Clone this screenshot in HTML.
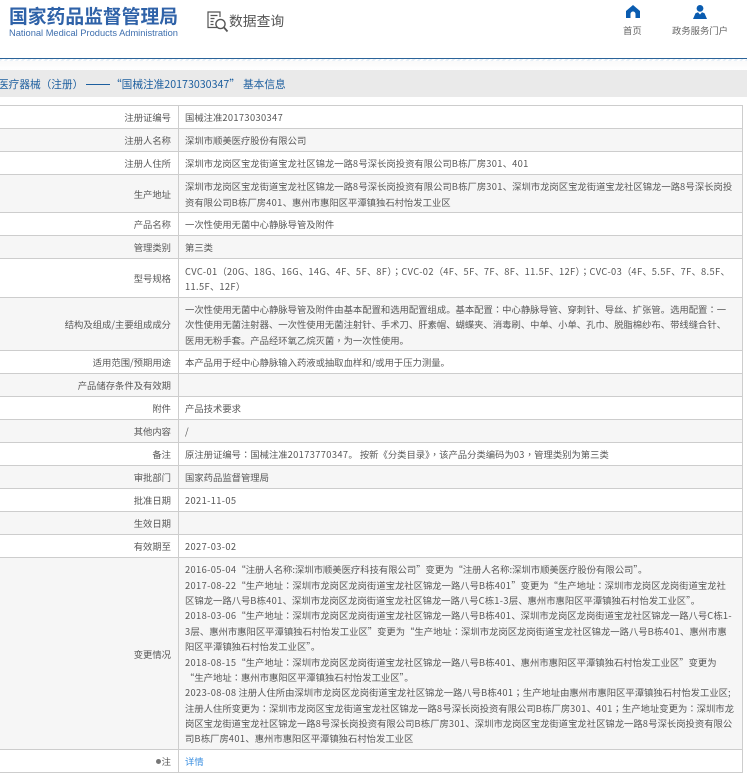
<!DOCTYPE html>
<html><head><meta charset="utf-8"><title>数据查询</title>
<style>
html,body{margin:0;padding:0;background:#fff;width:747px;height:780px;overflow:hidden}
body{font-family:"Noto Sans CJK SC","Liberation Sans",sans-serif;position:relative;color:#585858}
#w{position:absolute;left:0;top:0;width:747px;height:780px;overflow:hidden;filter:blur(.3px)}
.a{position:absolute;white-space:nowrap}
.r{position:absolute;left:0;width:743px;border-top:1px solid #cdcdcd;box-sizing:border-box}
.r.g{background:#f6f6f6}
.l{position:absolute;left:0;width:171px;top:0;bottom:0;display:flex;align-items:center;justify-content:flex-end;font-size:9.33px;color:#585858;white-space:nowrap}
.v{position:absolute;left:185px;top:2px;bottom:0;display:flex;align-items:center;font-size:9.33px;line-height:15.36px;color:#585858;white-space:nowrap}
.d{position:absolute;left:178px;top:0;bottom:0;width:1px;background:#cdcdcd}
i{font-style:normal;letter-spacing:.35px}
b{font-weight:normal;font-family:"Noto Sans CJK TC",sans-serif}
</style></head><body><div id="w">
<div class="a" style="left:9px;top:3px;font-size:18.8px;line-height:26px;font-weight:bold;color:#2f62a8">国家药品监督管理局</div>
<div class="a" style="left:9px;top:27px;font-family:'Liberation Sans',sans-serif;font-size:9.3px;line-height:12px;color:#3f6fae">National Medical Products Administration</div>
<svg class="a" style="left:207px;top:11px" width="23" height="22" viewBox="0 0 23 22" fill="none" stroke="#555" stroke-width="1.2"><path d="M11 16.5H1V1h12v5"/><path d="M3.5 4.5h7M3.5 7.5h4M3.5 10.5h3M3.5 13.5h3"/><circle cx="13.5" cy="13" r="4.6" stroke-width="1.4"/><path d="M17 16.5l3.5 4" stroke-width="1.8"/></svg>
<div class="a" style="left:229px;top:9px;font-size:13.8px;line-height:22px;color:#555">数据查询</div>
<svg class="a" style="left:626px;top:5px" width="14" height="13" viewBox="0 0 14 13"><path fill="#0a5cb0" d="M7 0L14 6V13H9.5V9a2.5 2.5 0 0 0-5 0V13H0V6Z"/></svg>
<div class="a" style="left:623px;top:23px;font-size:9.33px;line-height:14px;color:#666">首页</div>
<svg class="a" style="left:693px;top:5px" width="14" height="14" viewBox="0 0 14 14"><circle cx="7" cy="3.4" r="3.4" fill="#0a5cb0"/><path fill="#0a5cb0" d="M0 14L2.5 8.2L5 7.2L7 9.5L9 7.2L11.5 8.2L14 14Z"/></svg>
<div class="a" style="left:672px;top:23px;font-size:9.33px;line-height:14px;color:#666">政务服务门户</div>
<div class="a" style="left:0;top:58px;width:747px;height:1px;background:#2b6399"></div>
<div class="a" style="left:0;top:59px;width:747px;height:2px;background:repeating-linear-gradient(135deg,#e6eff7 0 2px,#fff 2px 4px)"></div>
<div class="a" style="left:0;top:61px;width:747px;height:9px;background:linear-gradient(#fafafa,#fff)"></div>
<div class="a" style="left:0;top:70px;width:747px;height:27px;background:#eaeaea"></div>
<div class="a" style="left:-2px;top:71px;font-size:10.67px;line-height:27px;color:#1d5f9f">医疗器械（注册）</div>
<div class="a" style="left:86px;top:83.5px;width:24px;height:1px;background:#1d5f9f"></div>
<div class="a" style="left:111px;top:71px;font-size:10.67px;line-height:27px;color:#1d5f9f">“国械注准20173030347”</div>
<div class="a" style="left:243px;top:71px;font-size:10.67px;line-height:27px;color:#1d5f9f">基本信息</div>
<div class="r" style="top:105px;height:23px"><div class="l">注册证编号</div><div class="d"></div><div class="v"><span>国械注准<i>20173030347</i></span></div></div>
<div class="r g" style="top:128px;height:23px"><div class="l">注册人名称</div><div class="d"></div><div class="v">深圳市顺美医疗股份有限公司</div></div>
<div class="r" style="top:151px;height:23px"><div class="l">注册人住所</div><div class="d"></div><div class="v"><span>深圳市龙岗区宝龙街道宝龙社区锦龙一路<i>8</i>号深长岗投资有限公司<i>B</i>栋厂房<i>301</i>、<i>401</i></span></div></div>
<div class="r g" style="top:174px;height:38px"><div class="l">生产地址</div><div class="d"></div><div class="v"><div>深圳市龙岗区宝龙街道宝龙社区锦龙一路<i>8</i>号深长岗投资有限公司<i>B</i>栋厂房<i>301</i>、深圳市龙岗区宝龙街道宝龙社区锦龙一路<i>8</i>号深长岗投<br>资有限公司<i>B</i>栋厂房<i>401</i>、惠州市惠阳区平潭镇独石村怡发工业区</div></div></div>
<div class="r" style="top:212px;height:23px"><div class="l">产品名称</div><div class="d"></div><div class="v">一次性使用无菌中心静脉导管及附件</div></div>
<div class="r g" style="top:235px;height:23px"><div class="l">管理类别</div><div class="d"></div><div class="v">第三类</div></div>
<div class="r" style="top:258px;height:39px"><div class="l">型号规格</div><div class="d"></div><div class="v"><div><i>CVC-01</i><b>（</b><i>20G</i>、<i>18G</i>、<i>16G</i>、<i>14G</i>、<i>4F</i>、<i>5F</i>、<i>8F</i><b>）；</b><i>CVC-02</i><b>（</b><i>4F</i>、<i>5F</i>、<i>7F</i>、<i>8F</i>、<i>11.5F</i>、<i>12F</i><b>）；</b><i>CVC-03</i><b>（</b><i>4F</i>、<i>5.5F</i>、<i>7F</i>、<i>8.5F</i>、<br><i>11.5F</i>、<i>12F</i><b>）</b></div></div></div>
<div class="r g" style="top:297px;height:53px"><div class="l">结构及组成/主要组成成分</div><div class="d"></div><div class="v"><div>一次性使用无菌中心静脉导管及附件由基本配置和选用配置组成。基本配置<b>：</b>中心静脉导管、穿刺针、导丝、扩张管。选用配置<b>：</b>一<br>次性使用无菌注射器、一次性使用无菌注射针、手术刀、肝素帽、蝴蝶夹、消毒刷、中单、小单、孔巾、脱脂棉纱布、带线缝合针、<br>医用无粉手套。产品经环氧乙烷灭菌<b>，</b>为一次性使用。</div></div></div>
<div class="r" style="top:350px;height:23px"><div class="l">适用范围/预期用途</div><div class="d"></div><div class="v">本产品用于经中心静脉输入药液或抽取血样和/或用于压力测量。</div></div>
<div class="r g" style="top:373px;height:23px"><div class="l">产品储存条件及有效期</div><div class="d"></div><div class="v"></div></div>
<div class="r" style="top:396px;height:23px"><div class="l">附件</div><div class="d"></div><div class="v">产品技术要求</div></div>
<div class="r g" style="top:419px;height:23px"><div class="l">其他内容</div><div class="d"></div><div class="v">/</div></div>
<div class="r" style="top:442px;height:23px"><div class="l">备注</div><div class="d"></div><div class="v"><span>原注册证编号<b>：</b>国械注准<i>20173770347</i>。 按新《分类目录》<b>，</b>该产品分类编码为<i>03</i><b>，</b>管理类别为第三类</span></div></div>
<div class="r g" style="top:465px;height:23px"><div class="l">审批部门</div><div class="d"></div><div class="v">国家药品监督管理局</div></div>
<div class="r" style="top:488px;height:23px"><div class="l">批准日期</div><div class="d"></div><div class="v"><i>2021-11-05</i></div></div>
<div class="r g" style="top:511px;height:23px"><div class="l">生效日期</div><div class="d"></div><div class="v"></div></div>
<div class="r" style="top:534px;height:23px"><div class="l">有效期至</div><div class="d"></div><div class="v"><i>2027-03-02</i></div></div>
<div class="r g" style="top:557px;height:192px"><div class="l">变更情况</div><div class="d"></div><div class="v"><div><i>2016-05-04</i>“注册人名称:深圳市顺美医疗科技有限公司”变更为“注册人名称:深圳市顺美医疗股份有限公司”。<br><i>2017-08-22</i>“生产地址<b>：</b>深圳市龙岗区龙岗街道宝龙社区锦龙一路八号<i>B</i>栋<i>401</i>”变更为“生产地址<b>：</b>深圳市龙岗区龙岗街道宝龙社<br>区锦龙一路八号<i>B</i>栋<i>401</i>、深圳市龙岗区龙岗街道宝龙社区锦龙一路八号<i>C</i>栋<i>1-3</i>层、惠州市惠阳区平潭镇独石村怡发工业区”。<br><i>2018-03-06</i>“生产地址<b>：</b>深圳市龙岗区龙岗街道宝龙社区锦龙一路八号<i>B</i>栋<i>401</i>、深圳市龙岗区龙岗街道宝龙社区锦龙一路八号<i>C</i>栋<i>1-</i><br><i>3</i>层、惠州市惠阳区平潭镇独石村怡发工业区”变更为“生产地址<b>：</b>深圳市龙岗区龙岗街道宝龙社区锦龙一路八号<i>B</i>栋<i>401</i>、惠州市惠<br>阳区平潭镇独石村怡发工业区”。<br><i>2018-08-15</i>“生产地址<b>：</b>深圳市龙岗区龙岗街道宝龙社区锦龙一路八号<i>B</i>栋<i>401</i>、惠州市惠阳区平潭镇独石村怡发工业区”变更为<br>“生产地址<b>：</b>惠州市惠阳区平潭镇独石村怡发工业区”。<br><i>2023-08-08</i> 注册人住所由深圳市龙岗区龙岗街道宝龙社区锦龙一路八号<i>B</i>栋<i>401</i><b>；</b>生产地址由惠州市惠阳区平潭镇独石村怡发工业区;<br>注册人住所变更为<b>：</b>深圳市龙岗区宝龙街道宝龙社区锦龙一路<i>8</i>号深长岗投资有限公司<i>B</i>栋厂房<i>301</i>、<i>401</i><b>；</b>生产地址变更为<b>：</b>深圳市龙<br>岗区宝龙街道宝龙社区锦龙一路<i>8</i>号深长岗投资有限公司<i>B</i>栋厂房<i>301</i>、深圳市龙岗区宝龙街道宝龙社区锦龙一路<i>8</i>号深长岗投资有限公<br>司<i>B</i>栋厂房<i>401</i>、惠州市惠阳区平潭镇独石村怡发工业区</div></div></div>
<div class="r" style="top:749px;height:24px;border-bottom:1px solid #cdcdcd"><div class="l"><span style="display:inline-block;width:5px;height:5px;border-radius:50%;background:#777;margin-right:1px"></span>注</div><div class="d"></div><div class="v" style="color:#3b8fe0">详情</div></div>
<div class="a" style="left:742px;top:105px;width:1px;height:668px;background:#cdcdcd"></div>
</div></body></html>
